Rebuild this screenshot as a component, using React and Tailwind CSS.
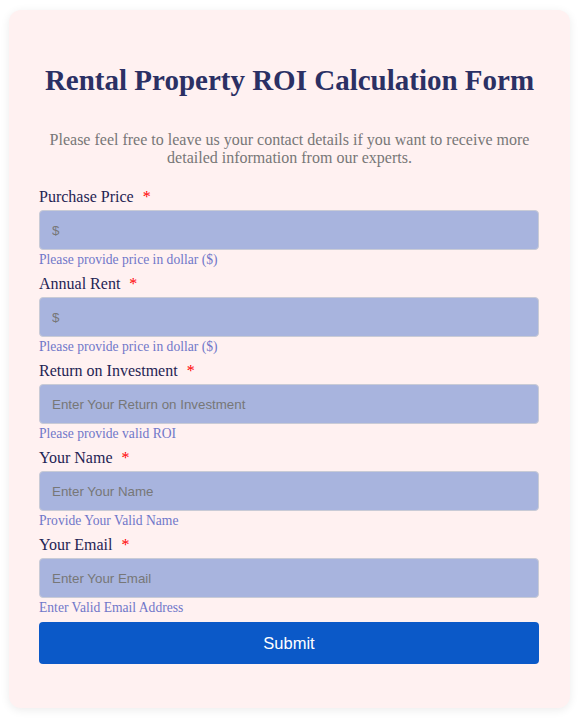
const SERIF = "font-['Liberation_Serif','Times_New_Roman',serif]";

const fields = [
  { label: 'Purchase Price', placeholder: '$', help: 'Please provide price in dollar ($)' },
  { label: 'Annual Rent', placeholder: '$', help: 'Please provide price in dollar ($)' },
  { label: 'Return on Investment', placeholder: 'Enter Your Return on Investment', help: 'Please provide valid ROI' },
  { label: 'Your Name', placeholder: 'Enter Your Name', help: 'Provide Your Valid Name' },
  { label: 'Your Email', placeholder: 'Enter Your Email', help: 'Enter Valid Email Address' },
];

export default function App() {
  return (
    <div className="min-h-screen bg-white px-[9px] pt-[10px] pb-[14px]">
      <div className={`${SERIF} w-[561px] rounded-[12px] bg-[#fff1f1] px-[30px] pt-[53px] pb-[44px] shadow-[0_2px_10px_rgba(0,0,0,0.08)]`}>
        <h1 className="text-center text-[29px] font-bold leading-[34px] text-[#2b3064]">
          Rental Property ROI Calculation Form
        </h1>
        <p className="mx-auto mt-[34px] w-[500px] text-center text-[16px] leading-[18px] text-[#777777]">
          Please feel free to leave us your contact details if you want to receive more detailed information from our experts.
        </p>
        <form className="mt-[21px]" onSubmit={(e) => e.preventDefault()}>
          {fields.map((f) => (
            <div key={f.label}>
              <label className="mb-[5px] block text-[16px] leading-[17px] text-[#1f2454]">
                {f.label}
                <span className="ml-[9px] text-[#ff0000]">*</span>
              </label>
              <input
                type="text"
                placeholder={f.placeholder}
                className="block h-10 w-[500px] rounded-[4px] border border-[#c9cbd6] bg-[#a8b4de] px-[12px] font-['Liberation_Sans',Arial,sans-serif] text-[13.333px] text-[#333] outline-none placeholder:text-[#777777]"
              />
              <div className="mt-[2px] mb-[8px] text-[13.6px] leading-[15px] text-[#7077c9]">{f.help}</div>
            </div>
          ))}
          <button
            type="submit"
            className="mt-[-1px] block h-[42px] w-[500px] rounded-[4px] bg-[#0b59c8] font-['Liberation_Sans',Arial,sans-serif] text-[16.5px] text-white"
          >
            Submit
          </button>
        </form>
      </div>
    </div>
  );
}
